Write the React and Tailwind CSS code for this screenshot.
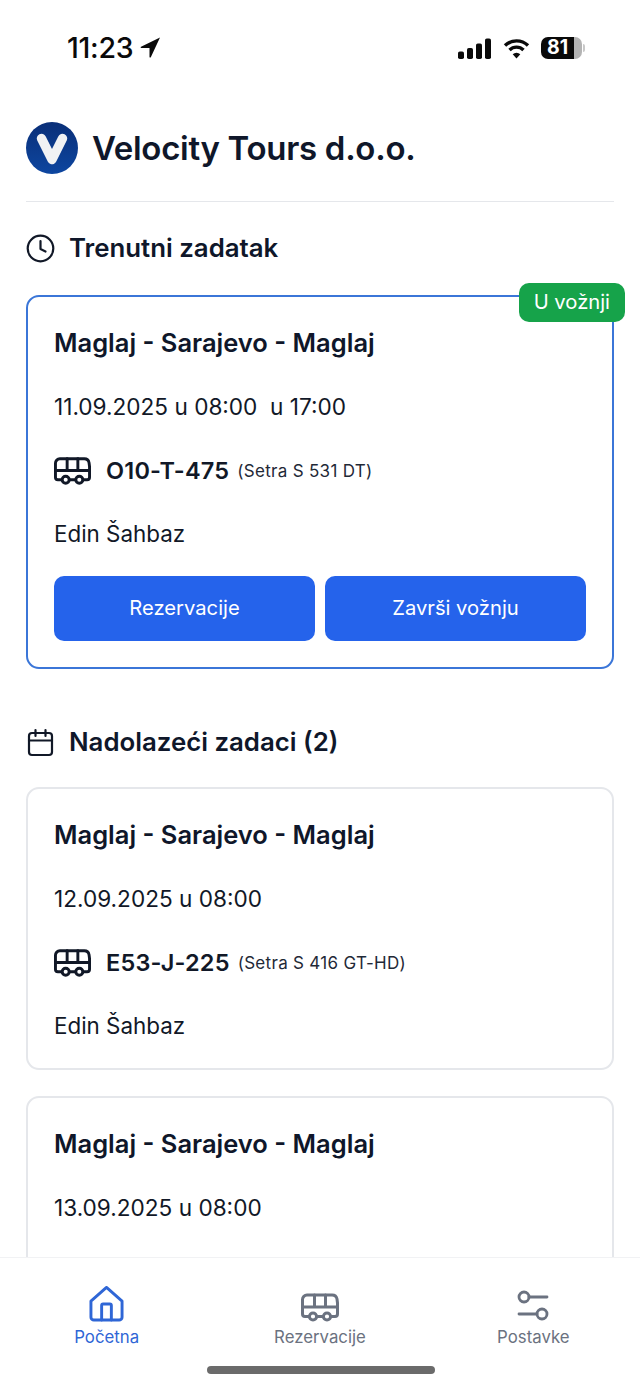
import React from 'react';

const BusIcon = ({ className }) => (
  <svg viewBox="0 0 38 28" fill="none" stroke="currentColor" strokeWidth="3" strokeLinecap="round" strokeLinejoin="round" className={className}>
    <path d="M7.500 23H4a2.500 2.500 0 0 1-2.500-2.500V6A4.500 4.500 0 0 1 6 1.500h25A5 5 0 0 1 36 5.500l.5 4v11A2.500 2.500 0 0 1 34 23h-4" />
    <path d="M1.500 13.500h35M13.500 1.500v12M24.500 1.500v12M16.500 23h5" />
    <circle cx="12" cy="23" r="3.600" />
    <circle cx="26" cy="23" r="3.600" />
  </svg>
);

const TripHead = ({ date }) => (
  <>
    <div className="h-16 flex items-center text-[25.5px] font-semibold text-[#0f172a]">Maglaj - Sarajevo - Maglaj</div>
    <div className="h-16 flex items-center text-[22.6px] text-[#111827] whitespace-pre">{date}</div>
  </>
);

const Trip = ({ date, plate, model, children }) => (
  <>
    <TripHead date={date} />
    <div className="h-[63px] flex items-center text-[#111827]">
      <BusIcon className="w-[37px] h-[28px] mr-[15px]" />
      <span className="text-[23.500px] font-semibold tracking-[0.2px]">{plate}</span>
      <span className="text-[17px] ml-2 mt-0.5 text-[#1f2937] tracking-[0.3px]">{model}</span>
    </div>
    <div className="h-[63px] flex items-center text-[22.4px] text-[#111827]">Edin Šahbaz</div>
    {children}
  </>
);

export default function App() {
  return (
    <div className="w-[640px] h-[1387px] bg-white overflow-hidden flex flex-col font-['Inter',sans-serif]">
      <div className="flex-1 min-h-0 overflow-hidden">
        {/* status bar */}
        <div className="h-[100px] flex items-start justify-between pl-[67px] pr-[55px] pt-[30px] text-[#0a0a0a]">
          <div className="flex items-center gap-[7px]">
            <span className="text-[28.5px] leading-9 font-medium tracking-[-0.3px]">11:23</span>
            <svg viewBox="0 0 20 22" className="w-[21px] h-[22px]" fill="currentColor">
              <path d="M19.500 0.500L0.500 9.800c-.6.300-.4 1.200.3 1.200h8.200v8.900c0 .7 1 .9 1.300.3z" />
            </svg>
          </div>
          <div className="flex items-center gap-[11px] h-9">
            <svg viewBox="0 0 33 21" className="w-[33px] h-[21px] mr-px" fill="currentColor">
              <rect x="0" y="13.500" width="6" height="7.500" rx="1.800" />
              <rect x="9" y="10" width="6" height="11" rx="1.800" />
              <rect x="18" y="5.500" width="6" height="15.500" rx="1.800" />
              <rect x="27" y="0.500" width="6" height="20.500" rx="1.800" />
            </svg>
            <svg viewBox="0 0 27 21" className="w-[27px] h-[21px]" fill="none" stroke="currentColor" strokeWidth="3.400">
              <path d="M2 7.500a16.500 16.500 0 0 1 23 0" />
              <path d="M6.500 12a10 10 0 0 1 14 0" />
              <path d="M13.500 20.500l-3.800-4.300a5.500 5.500 0 0 1 7.600 0z" fill="currentColor" stroke="none" />
            </svg>
            <div className="flex items-center">
              <div className="flex w-[41px] h-[22px] text-white">
                <span className="w-[33px] h-full flex items-center justify-center rounded-l-[7px] bg-[#0a0a0a] text-[19.5px] font-bold leading-none">81</span>
                <div className="w-[8px] h-full rounded-r-[7px] bg-[#b4b4b4]" />
              </div>
              <div className="w-[2px] h-2 ml-px rounded-r bg-[#c8c8c8]" />
            </div>
          </div>
        </div>

        <div className="px-[26px]">
          {/* company header */}
          <div className="flex items-center gap-[14px] mt-[22px] h-[52px]">
            <svg viewBox="0 0 52 52" className="w-[52px] h-[52px] shrink-0">
              <defs>
                <linearGradient id="logoBg" x1="0" y1="0" x2="0" y2="1">
                  <stop offset="0" stopColor="#0a2f78" />
                  <stop offset="1" stopColor="#0d46a0" />
                </linearGradient>
              </defs>
              <circle cx="26" cy="26" r="26" fill="url(#logoBg)" />
              <path d="M15.500 16.500L26 37.500L36.500 16.500" fill="none" stroke="#f1f2f4" strokeWidth="9.500" strokeLinecap="round" strokeLinejoin="round" />
            </svg>
            <h1 className="text-[33px] font-semibold text-[#0f172a] tracking-[-0.3px] leading-none">Velocity Tours d.o.o.</h1>
          </div>
          <div className="h-px bg-[#e5e7eb] mt-[27px]" />

          {/* current task */}
          <div className="flex items-center gap-[14px] mt-[30px] h-8">
            <svg viewBox="0 0 29 29" className="w-[29px] h-[29px]" fill="none" stroke="#111827" strokeWidth="2.200" strokeLinecap="round" strokeLinejoin="round">
              <circle cx="14.500" cy="14.500" r="12.800" />
              <path d="M14.500 7v8l5 2.500" />
            </svg>
            <h2 className="text-[25.8px] font-semibold text-[#0f172a]">Trenutni zadatak</h2>
          </div>

          <div className="relative mt-[31px] h-[374px] rounded-[13px] border-2 border-[#3b76d8] px-[26px] pt-[14px]">
            <span className="absolute -top-[14px] -right-[13px] h-[39px] px-[15px] flex items-center rounded-[10px] bg-[#16a34a] text-white text-[20.200px]">U vožnji</span>
            <Trip date="11.09.2025 u 08:00  u 17:00" plate="O10-T-475" model="(Setra S 531 DT)">
              <div className="grid grid-cols-2 gap-[10px] mt-[11px]">
                <button className="h-[65px] rounded-[10px] bg-[#2563eb] text-white text-[20.200px]">Rezervacije</button>
                <button className="h-[65px] rounded-[10px] bg-[#2563eb] text-white text-[20.200px]">Završi vožnju</button>
              </div>
            </Trip>
          </div>

          {/* upcoming tasks */}
          <div className="flex items-center gap-[14px] mt-[57px] h-8">
            <svg viewBox="0 0 29 29" className="w-[29px] h-[29px]" fill="none" stroke="#111827" strokeWidth="2.200" strokeLinecap="round" strokeLinejoin="round">
              <rect x="3" y="5" width="23" height="22" rx="3" />
              <path d="M3 12.500h23M9.500 2v6M19.500 2v6" />
            </svg>
            <h2 className="text-[25.8px] font-semibold text-[#0f172a]">Nadolazeći zadaci (2)</h2>
          </div>

          <div className="mt-[29px] h-[283px] rounded-[13px] border-2 border-[#e5e7eb] px-[26px] pt-[14px]">
            <Trip date="12.09.2025 u 08:00" plate="E53-J-225" model="(Setra S 416 GT-HD)" />
          </div>

          {/* the rest of this card is under the bottom nav */}
          <div className="mt-[26px] h-[283px] rounded-[13px] border-2 border-[#e5e7eb] px-[26px] pt-[14px]">
            <TripHead date="13.09.2025 u 08:00" />
          </div>
        </div>
      </div>

      {/* bottom nav */}
      <nav className="relative z-10 h-[130px] shrink-0 bg-white border-t border-[#f1f2f4] grid grid-cols-3 pt-[28px] text-[16.8px]">
        <div className="flex flex-col items-center gap-[3px] text-[#2f66d6]">
          <svg viewBox="0 0 36 37" className="w-[35px] h-[36px]" fill="none" stroke="currentColor" strokeWidth="3" strokeLinecap="round" strokeLinejoin="round">
            <path d="M2 15.500L18 1.500l16 14V32a3 3 0 0 1-3 3H5a3 3 0 0 1-3-3z" />
            <path d="M13 35V20a1.500 1.500 0 0 1 1.500-1.500h7A1.500 1.500 0 0 1 23 20v15" />
          </svg>
          <span className="whitespace-nowrap leading-6">Početna</span>
        </div>
        <div className="flex flex-col items-center gap-[3px] text-[#6b7280] pt-[7px]">
          <BusIcon className="w-[38px] h-[29px]" />
          <span className="whitespace-nowrap leading-6">Rezervacije</span>
        </div>
        <div className="flex flex-col items-center gap-[3px] text-[#6b7280] pt-[4px]">
          <svg viewBox="0 0 32 32" className="w-[32px] h-[32px]" fill="none" stroke="currentColor" strokeWidth="2.800" strokeLinecap="round">
            <circle cx="7" cy="7" r="5" />
            <path d="M12 7h18M2 24h18" />
            <circle cx="25" cy="24" r="5" />
          </svg>
          <span className="whitespace-nowrap leading-6">Postavke</span>
        </div>
        <div className="absolute left-[207px] bottom-[13px] w-[228px] h-2 rounded-full bg-[#6b6b6b]" />
      </nav>
    </div>
  );
}
